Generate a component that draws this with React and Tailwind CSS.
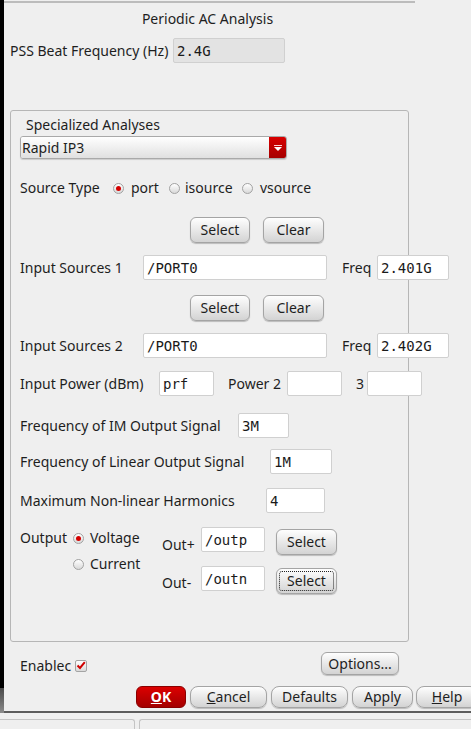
import React from 'react';

// small building blocks for the Qt-style dialog
function Btn({ w, h = 'h-[26px]', children, focused, className = '' }) {
    return (
        <div className={`relative ${w} ${h} shrink-0 flex items-center justify-center rounded-[6px] border border-[#a4a4a4] bg-gradient-to-b from-[#fefefe] to-[#d3d3d3] shadow-[0_1px_1px_rgba(0,0,0,0.22)] text-[#1e1e1e] ${className}`}>
            {focused && <span className="absolute inset-[2px] rounded-[3px] border border-dotted border-[#222]" />}
            {children}
        </div>
    );
}

function Field({ w, value, disabled }) {
    return (
        <div className={`${w} h-[25px] shrink-0 flex items-center pl-[3px] border border-[#d0d0d0] rounded-[2px] ${disabled ? 'bg-[#e3e3e3]' : 'bg-white'} font-['DejaVu_Sans_Mono',monospace] text-[14px] text-[#1a1a1a]`}>
            {value}
        </div>
    );
}

function Label({ w, className = '', children }) {
    return <span className={`${w} shrink-0 whitespace-nowrap ${className}`}>{children}</span>;
}

function Radio({ on }) {
    return (
        <span className="w-[11px] h-[11px] shrink-0 rounded-full border border-[#a2a2a2] bg-gradient-to-b from-[#ffffff] to-[#d9d9d9] flex items-center justify-center">
            {on && <span className="w-[5px] h-[5px] rounded-full bg-[#d40000]" />}
        </span>
    );
}

export default function App() {
    return (
        <div className="w-[471px] h-[729px] overflow-hidden flex flex-col bg-[#efefef] text-[14px] leading-[18px] text-[#1e1e1e] font-['Noto_Sans',sans-serif]">
            <div className="h-[713px] flex">
                {/* window edge behind */}
                <div className="w-[4px] shrink-0 flex flex-col">
                    <div className="h-[688px] bg-black" />
                    <div className="flex-1 bg-gradient-to-b from-[#4a4a4a] to-[#8c8c8c]" />
                </div>

                {/* dialog */}
                <div className="flex-1 flex flex-col overflow-hidden border-b-2 border-[#5c5c5c]">
                    <div className="mt-[1px] w-[411px] h-[2px] bg-[#bcbcbc]" />
                    <div className="mt-[7px] w-[407px] text-center">Periodic AC Analysis</div>

                    <div className="mt-[10px] ml-[6px] flex items-center">
                        <Label w="w-[163px]">PSS Beat Frequency (Hz)</Label>
                        <Field w="w-[112px]" value="2.4G" disabled />
                    </div>

                    {/* Specialized analyses group */}
                    <div className="mt-[47px] ml-[6px] w-[399px] h-[532px] shrink-0 border border-[#b6b6b6] rounded-[3px] flex flex-col pl-[9px]">
                        <div className="mt-[5px] ml-[6px]">Specialized Analyses</div>
                        <div className="mt-[2px] w-[267px] h-[23px] flex rounded-[3px] border border-[#a9a9a9] overflow-hidden shadow-[0_1px_1px_rgba(0,0,0,0.15)]">
                            <div className="flex-1 flex items-center pl-[1px] bg-gradient-to-b from-white to-[#e0e0e0]">Rapid IP3</div>
                            <div className="w-[17px] flex items-center justify-center bg-gradient-to-b from-[#d80000] to-[#a60000]">
                                <svg width="8" height="6" viewBox="0 0 8 6">
                                    <rect x="0" y="0" width="8" height="1" fill="#ffd0d0" />
                                    <path d="M0 2 L8 2 L4 6 Z" fill="#fff" />
                                </svg>
                            </div>
                        </div>

                        <div className="mt-[20px] h-[18px] flex items-center">
                            <Label w="w-[93px]">Source Type</Label>
                            <span className="w-[56px] shrink-0 flex items-center"><Radio on /><span className="ml-[7px]">port</span></span>
                            <span className="w-[73px] shrink-0 flex items-center"><Radio /><span className="ml-[5px]">isource</span></span>
                            <span className="flex items-center"><Radio /><span className="ml-[7px]">vsource</span></span>
                        </div>

                        <div className="mt-[20px] ml-[170px] flex gap-[13px]">
                            <Btn w="w-[60px]">Select</Btn>
                            <Btn w="w-[61px]">Clear</Btn>
                        </div>
                        <div className="mt-[12px] flex items-center">
                            <Label w="w-[123px]">Input Sources 1</Label>
                            <Field w="w-[184px]" value="/PORT0" />
                            <Label w="w-[35px]" className="ml-[15px]">Freq</Label>
                            <Field w="w-[72px]" value="2.401G" />
                        </div>

                        <div className="mt-[15px] ml-[170px] flex gap-[13px]">
                            <Btn w="w-[60px]">Select</Btn>
                            <Btn w="w-[61px]">Clear</Btn>
                        </div>
                        <div className="mt-[12px] flex items-center">
                            <Label w="w-[123px]">Input Sources 2</Label>
                            <Field w="w-[184px]" value="/PORT0" />
                            <Label w="w-[35px]" className="ml-[15px]">Freq</Label>
                            <Field w="w-[72px]" value="2.402G" />
                        </div>

                        <div className="mt-[13px] flex items-center">
                            <Label w="w-[139px]">Input Power (dBm)</Label>
                            <Field w="w-[55px]" value="prf" />
                            <Label w="w-[59px]" className="ml-[14px]">Power 2</Label>
                            <Field w="w-[55px]" value="" />
                            <Label w="w-[11px]" className="ml-[14px]">3</Label>
                            <Field w="w-[55px]" value="" />
                        </div>

                        <div className="mt-[17px] flex items-center">
                            <Label w="w-[218px]">Frequency of IM Output Signal</Label>
                            <Field w="w-[51px]" value="3M" />
                        </div>
                        <div className="mt-[11px] flex items-center">
                            <Label w="w-[250px]">Frequency of Linear Output Signal</Label>
                            <Field w="w-[62px]" value="1M" />
                        </div>
                        <div className="mt-[14px] flex items-center">
                            <Label w="w-[246px]">Maximum Non-linear Harmonics</Label>
                            <Field w="w-[59px]" value="4" />
                        </div>

                        {/* output */}
                        <div className="mt-[14px] flex">
                            <div className="w-[142px] shrink-0 flex flex-col pt-[2px]">
                                <div className="flex items-center">
                                    <Label w="w-[53px]">Output</Label>
                                    <Radio on />
                                    <span className="ml-[6px]">Voltage</span>
                                </div>
                                <div className="mt-[8px] ml-[53px] flex items-center">
                                    <Radio />
                                    <span className="ml-[6px]">Current</span>
                                </div>
                            </div>
                            <div className="flex flex-col">
                                <div className="h-[39px] flex items-start">
                                    <Label w="w-[39px]" className="pt-[9px]">Out+</Label>
                                    <Field w="w-[64px]" value="/outp" />
                                    <Btn w="w-[61px]" className="ml-[11px] mt-[2px]">Select</Btn>
                                </div>
                                <div className="flex items-start">
                                    <Label w="w-[39px]" className="pt-[8px]">Out-</Label>
                                    <Field w="w-[64px]" value="/outn" />
                                    <Btn w="w-[61px]" className="ml-[11px] mt-[2px]" focused>Select</Btn>
                                </div>
                            </div>
                        </div>
                    </div>

                    <div className="mt-[10px] h-[23px] flex items-center">
                        <Label w="" className="ml-[16px] pt-[4px]">Enablec</Label>
                        <span className="ml-[4px] mt-[4px] w-[12px] h-[12px] shrink-0 flex items-center justify-center border border-[#a4a4a4] rounded-[2px] bg-gradient-to-b from-white to-[#dadada]">
                            <svg width="10" height="9" viewBox="0 0 10 9">
                                <path d="M1.5 4.5 L4 7 L8.8 1.2" stroke="#d00000" strokeWidth="2" fill="none" />
                            </svg>
                        </span>
                        <Btn w="w-[78px]" h="h-[23px]" className="ml-auto mr-[72px]">Options...</Btn>
                    </div>

                    <div className="mt-[11px] ml-[132px] flex gap-[4px]">
                        <div className="w-[50px] h-[22px] shrink-0 flex items-center justify-center rounded-[6px] border border-[#8a0000] bg-gradient-to-b from-[#dc0000] to-[#a40000] text-white font-bold">
                            <span><span className="underline">O</span>K</span>
                        </div>
                        <Btn w="w-[77px]" h="h-[22px]" className="rounded-[8px]"><span><span className="underline">C</span>ancel</span></Btn>
                        <Btn w="w-[77px]" h="h-[22px]" className="rounded-[8px]">Defaults</Btn>
                        <Btn w="w-[61px]" h="h-[22px]" className="rounded-[8px]">Apply</Btn>
                        <Btn w="w-[62px]" h="h-[22px]" className="rounded-[8px] -ml-[1px]"><span><span className="underline">H</span>elp</span></Btn>
                    </div>
                </div>
            </div>

            {/* panel below the dialog */}
            <div className="flex-1 flex mt-[6px]">
                <div className="w-[135px] border-t border-r border-[#c4c4c4] rounded-tr-[3px]" />
                <div className="ml-[4px] flex-1 border-t border-l border-[#c4c4c4] rounded-tl-[3px]" />
            </div>
        </div>
    );
}
